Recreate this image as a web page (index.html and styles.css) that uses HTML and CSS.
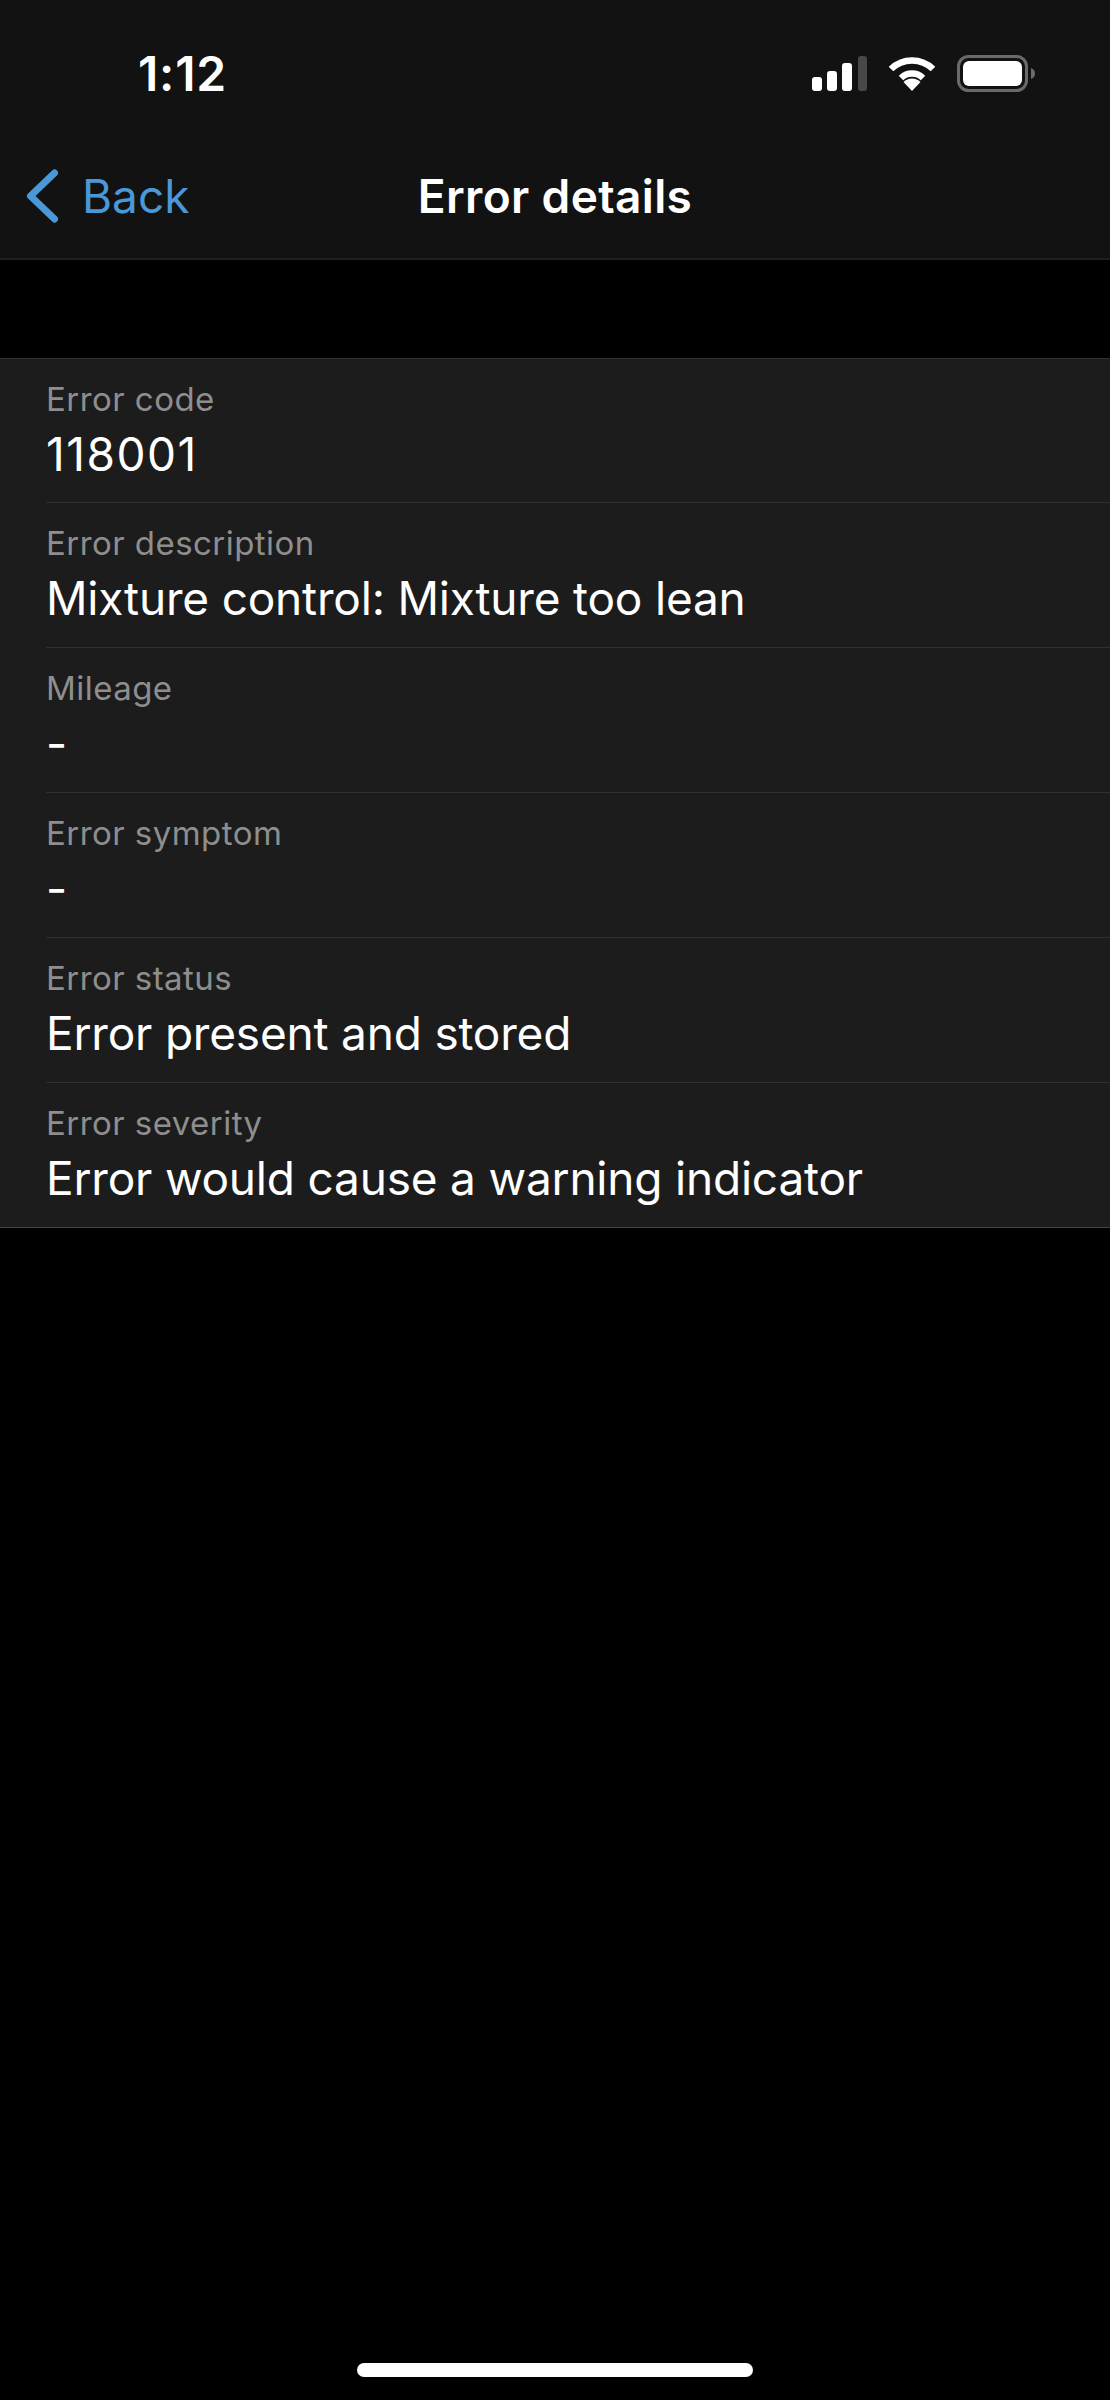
FILE: index.html
```html
<!DOCTYPE html>
<html lang="en">
<head>
    <meta charset="UTF-8">
    <title>Error details</title>
    <link rel="stylesheet" href="styles.css">
</head>
<body>
    <header class="top">
        <div class="status">
            <span class="time">1:12</span>
            <div class="status-icons">
                <svg width="55" height="35" viewBox="0 0 55 35">
                    <rect x="0" y="21" width="10" height="14" rx="3" fill="#fff"/>
                    <rect x="15" y="15" width="10" height="20" rx="3" fill="#fff"/>
                    <rect x="30" y="7" width="10" height="28" rx="3" fill="#fff"/>
                    <rect x="46" y="0" width="9" height="35" rx="3" fill="#48484a"/>
                </svg>
                <svg width="48" height="35" viewBox="0 0 48 35">
                    <path d="M3 13 A30 30 0 0 1 45 13" fill="none" stroke="#fff" stroke-width="6.5"/>
                    <path d="M13 22 A16 16 0 0 1 35 22" fill="none" stroke="#fff" stroke-width="6.5"/>
                    <path d="M24 35 L15.5 26 A12 12 0 0 1 32.5 26 Z" fill="#fff"/>
                </svg>
                <svg width="78" height="37" viewBox="0 0 78 37">
                    <rect x="1.5" y="1.5" width="68" height="34" rx="10" fill="none" stroke="#6a6a6a" stroke-width="3"/>
                    <rect x="6" y="6" width="59" height="25" rx="6" fill="#fff"/>
                    <path d="M74 13 C77 14 78 16 78 18.5 C78 21 77 23 74 24 Z" fill="#6a6a6a"/>
                </svg>
            </div>
        </div>
        <nav class="navbar">
            <a class="back">
                <svg width="36" height="58" viewBox="0 0 36 58">
                    <path d="M30.5 6 L6.5 29 L30.5 52" fill="none" stroke="#4a98d8" stroke-width="7" stroke-linecap="round" stroke-linejoin="round"/>
                </svg>
                <span>Back</span>
            </a>
            <h1 class="title">Error details</h1>
        </nav>
    </header>

    <main class="details">
        <div class="row">
            <div class="label">Error code</div>
            <div class="value code">118001</div>
        </div>
        <div class="row">
            <div class="label">Error description</div>
            <div class="value">Mixture control: Mixture too lean</div>
        </div>
        <div class="row">
            <div class="label">Mileage</div>
            <div class="value">-</div>
        </div>
        <div class="row">
            <div class="label">Error symptom</div>
            <div class="value">-</div>
        </div>
        <div class="row">
            <div class="label">Error status</div>
            <div class="value">Error present and stored</div>
        </div>
        <div class="row">
            <div class="label">Error severity</div>
            <div class="value">Error would cause a warning indicator</div>
        </div>
    </main>

    <div class="home-bar"></div>
</body>
</html>
```

FILE: styles.css
```css
html, body {
    margin: 0;
    height: 2400px;
    overflow: hidden;
}
body {
    background: #000;
    color: #fff;
    font-family: Inter, "Liberation Sans", sans-serif;
    display: flex;
    flex-direction: column;
}
.top {
    background: #121212;
    border-bottom: 2px solid #1f1f1f;
    height: 258px;
}
.status {
    height: 133px;
    display: flex;
    justify-content: space-between;
    align-items: flex-start;
    padding: 44px 75px 0 138px;
    box-sizing: border-box;
}
.time {
    font-size: 48px;
    line-height: 60px;
    font-weight: 600;
    letter-spacing: 0.8px;
}
.status-icons {
    display: flex;
    align-items: center;
    gap: 21px;
    padding-top: 11px;
}
.navbar {
    height: 125px;
    display: grid;
    grid-template-columns: 1fr auto 1fr;
    align-items: center;
}
.back {
    padding-left: 24px;
    display: flex;
    align-items: center;
    gap: 22px;
    color: #4a98d8;
    font-size: 46px;
    line-height: 58px;
}
.title {
    margin: 0;
    font-size: 46px;
    line-height: 58px;
    font-weight: 600;
    letter-spacing: 0.35px;
}
.details {
    margin-top: 98px;
    background: #1c1c1c;
    border-top: 1px solid #333;
    border-bottom: 1px solid #444;
}
.row {
    margin-left: 46px;
    height: 124px;
    padding-top: 20px;
    border-bottom: 1px solid #303030;
}
.row:first-child {
    height: 123px;
}
.row:last-child {
    border-bottom: none;
}
.label {
    font-size: 33px;
    line-height: 40px;
    letter-spacing: 0.45px;
    color: #8e8e8e;
}
.value {
    font-size: 46px;
    line-height: 64px;
    margin-top: 3px;
    letter-spacing: -0.2px;
}
.code {
    letter-spacing: 1.5px;
}
.home-bar {
    margin: auto 0 23px 357px;
    width: 396px;
    height: 14px;
    border-radius: 7px;
    background: #fff;
}
```
